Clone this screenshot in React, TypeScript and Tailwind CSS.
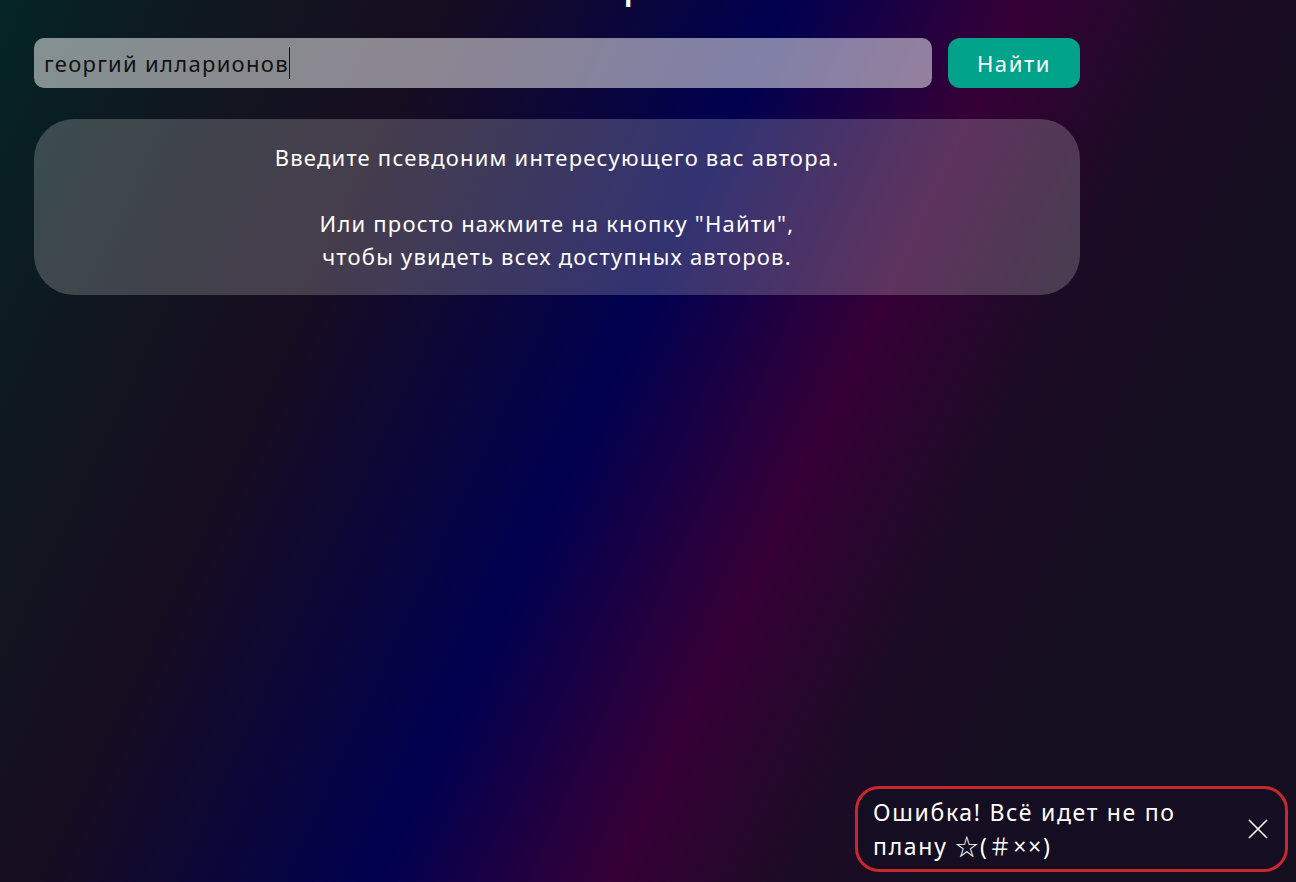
import { useState } from 'react';

const font = { fontFamily: '"Noto Sans", "Open Sans", "Noto Sans CJK JP", sans-serif' };

function CloseIcon() {
  return (
    <svg width="20" height="20" viewBox="0 0 20 20" fill="none">
      <path d="M1 1L19 19M19 1L1 19" stroke="white" strokeWidth="1.6" />
    </svg>
  );
}

export default function App() {
  const [query] = useState('георгий илларионов');

  return (
    <div
      className="relative h-[882px] w-full overflow-hidden bg-[linear-gradient(115deg,#042525_0%,#0f1820_12%,#170d20_26%,#000050_46%,#360036_60%,#1c0b25_70%,#150e20_80%,#140e1f_100%)] text-white"
      style={font}
    >
      <div className="w-[1080px] pl-[34px]">
        <h1 className="-mt-[33px] mb-[31px] h-[40px] pr-[16px] text-center text-[32px] leading-[40px] font-semibold tracking-[1px]">
          Поиск автора
        </h1>

        <div className="flex gap-4">
          <div className="flex h-[50px] flex-1 items-center rounded-[10px] bg-white/50 px-[10px] text-[22px] tracking-[1.3px] text-[#111]">
            <span>{query}</span>
            <span className="h-[32px] w-px bg-[#111]" />
          </div>
          <button className="h-[50px] w-[132px] rounded-xl bg-[#00a28a] text-[22px] tracking-[1.6px] text-white">
            Найти
          </button>
        </div>

        <div className="mt-[31px] rounded-[40px] bg-white/20 py-[22px] text-center text-[22px] leading-[33px] tracking-[1.2px]">
          <p>Введите псевдоним интересующего вас автора.</p>
          <p>&nbsp;</p>
          <p>Или просто нажмите на кнопку "Найти",</p>
          <p>чтобы увидеть всех доступных авторов.</p>
        </div>
      </div>

      <div className="absolute right-[8px] bottom-[10px] flex w-[433px] items-center justify-between rounded-[24px] border-[3px] border-[#c8282c] bg-[#150d21] py-[6px] pr-[17px] pl-[15px]">
        <p className="w-[340px] text-[23px] leading-[34px] tracking-[1.7px]">Ошибка! Всё идет не по плану ☆(＃××)</p>
        <CloseIcon />
      </div>
    </div>
  );
}
